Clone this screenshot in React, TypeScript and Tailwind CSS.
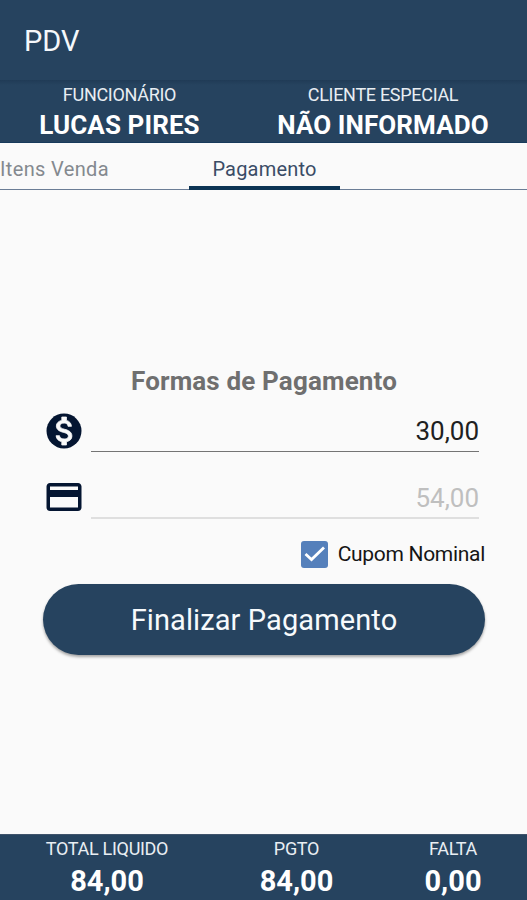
function Pair({ label, value, className, labelClass, valueClass }: { label: string; value: string; className: string; labelClass: string; valueClass: string }) {
  return (
    <div className={`flex flex-col items-center whitespace-nowrap text-white ${className}`}>
      <span className={`text-[18px] leading-[22px] text-[#e9eef3] ${labelClass}`}>{label}</span>
      <span className={`font-bold ${valueClass}`}>{value}</span>
    </div>
  );
}

export default function App() {
  return (
    <div className="flex h-[900px] w-[527px] flex-col overflow-hidden bg-[#fafafa] font-['Roboto',sans-serif]">
      <header className="flex h-[80px] shrink-0 items-center bg-[#26435f] pl-[24px] pt-[4px] text-[29px] text-[#f5f8fb]">
        PDV
      </header>
      <section className="flex h-[63px] shrink-0 border-b border-[#183a5b] bg-[#26435f] bg-linear-to-b from-[#203b56] to-[#26435f] to-[5px] pt-[4px]">
        <Pair label="FUNCIONÁRIO" value="LUCAS PIRES" className="w-[239px]" labelClass="tracking-[-0.3px]" valueClass="text-[26px] leading-[39px] tracking-[0.1px]" />
        <Pair label="CLIENTE ESPECIAL" value="NÃO INFORMADO" className="w-[288px]" labelClass="tracking-[-0.3px]" valueClass="text-[26px] leading-[39px] tracking-[0.1px]" />
      </section>
      <nav className="flex h-[47px] shrink-0 border-b border-[#6b7d96] text-[20px]">
        <div className="w-[189px] pt-[11px] leading-[30px] tracking-[0.35px] text-[#84898f]">Itens Venda</div>
        <div className="h-[47px] w-[151px] border-b-[4px] border-[#0c3454] pt-[11px] text-center leading-[30px] tracking-[0.2px] text-[#3a4c66]">Pagamento</div>
      </nav>
      <main className="flex grow flex-col pl-[43px] pr-[42px] pt-[174px]">
        <h1 className="text-center text-[26px] font-bold leading-[34px] tracking-[0.15px] text-[#6f6f6f]">Formas de Pagamento</h1>
        <div className="flex h-[54px] pr-[6px]">
          <svg viewBox="0 0 24 24" className="mt-[12px] size-[42px] shrink-0">
            <circle cx="12" cy="12" r="10" fill="#041531" />
            <path fill="#fafafa" stroke="#fafafa" strokeWidth=".45" d="M13.410 18.090V20h-2.670v-1.930c-1.710-.36-3.160-1.460-3.270-3.400h1.960c.1 1.050.82 1.870 2.650 1.870 1.960 0 2.400-.98 2.400-1.590 0-.83-.44-1.610-2.670-2.140-2.480-.6-4.180-1.620-4.180-3.670 0-1.720 1.390-2.840 3.110-3.210V4h2.670v1.950c1.860.45 2.790 1.860 2.850 3.390H14.300c-.05-1.110-.64-1.870-2.220-1.870-1.500 0-2.400.68-2.400 1.640 0 .84.65 1.390 2.670 1.910s4.180 1.390 4.180 3.910c-.01 1.830-1.380 2.830-3.120 3.160z" />
          </svg>
          <div className="ml-[6px] grow border-b-[1.500px] border-[#747474] pt-[14px] text-right text-[26px] leading-[39px] text-[#202020]">30,00</div>
        </div>
        <div className="flex h-[67px] pr-[6px]">
          <svg viewBox="0 0 24 24" className="mt-[24px] size-[42px] shrink-0" fill="#041531">
            <path d="M20 4H4c-1.110 0-1.990.89-1.990 2L2 18c0 1.110.89 2 2 2h16c1.110 0 2-.89 2-2V6c0-1.110-.89-2-2-2zm0 14H4v-6h16v6zm0-10H4V6h16v2z" />
          </svg>
          <div className="ml-[6px] grow border-b-2 border-[#dfdfdf] pt-[27px] text-right text-[26px] leading-[38px] text-[#bfbfbf]">54,00</div>
        </div>
        <label className="mt-[21px] flex h-[28px] items-center justify-end text-[21px] tracking-[-0.3px] text-[#151515]">
          <span className="mr-[10px] flex size-[27px] items-center justify-center rounded-[3px] bg-[#5580bb]">
            <svg viewBox="0 0 27 27" className="size-[27px]" fill="none" stroke="white" strokeWidth="2.800">
              <path d="M4.500 13 10.500 18.500 23 6.500" />
            </svg>
          </span>
          <span className="pt-[2px]">Cupom Nominal</span>
        </label>
        <button className="mt-[16px] h-[71px] shrink-0 rounded-full bg-[#26435f] pt-[3px] text-[29px] tracking-[0.1px] text-[#f7fafc] shadow-[0_2px_3px_rgba(0,0,0,0.35)]">
          Finalizar Pagamento
        </button>
      </main>
      <footer className="flex h-[66px] shrink-0 border-t border-[#3f536b] bg-[#26435f] pt-[3px]">
        <Pair label="TOTAL LIQUIDO" value="84,00" className="w-[214px]" labelClass="tracking-[-0.3px]" valueClass="text-[29px] leading-[42px]" />
        <Pair label="PGTO" value="84,00" className="w-[165px]" labelClass="tracking-[-0.3px]" valueClass="text-[29px] leading-[42px]" />
        <Pair label="FALTA" value="0,00" className="w-[148px]" labelClass="tracking-[-0.3px]" valueClass="text-[29px] leading-[42px]" />
      </footer>
    </div>
  );
}
